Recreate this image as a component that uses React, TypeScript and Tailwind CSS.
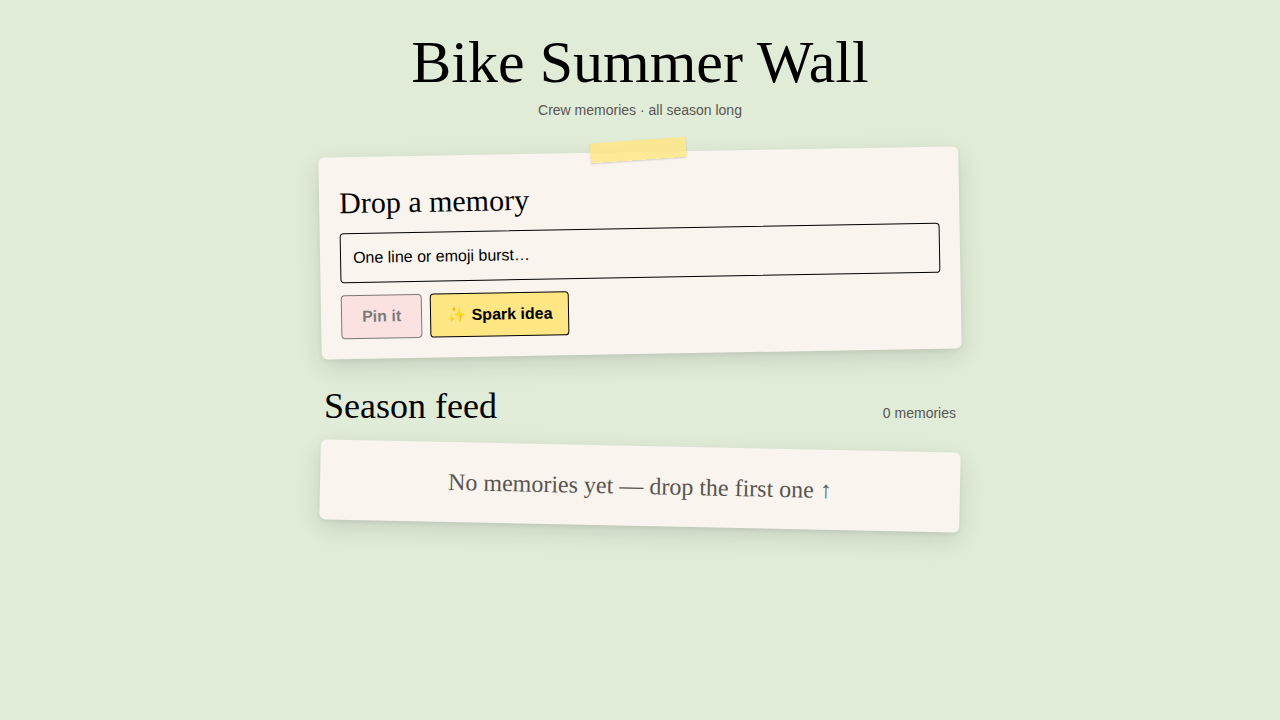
import { useState } from "react";
import type { FormEvent } from "react";

const ideas = [
  "Sunset loop with the whole crew 🚲",
  "Flat tire, best ice cream stop ever 🍦",
  "Night ride, string lights on 🌙",
];

const serif = "font-['Liberation_Serif',serif]";
const card =
  "rounded-md bg-[#f9f4ee] shadow-[0_8px_24px_rgba(0,0,0,0.12),0_2px_4px_rgba(0,0,0,0.06)]";
const button =
  "h-11 rounded border border-black font-bold text-black disabled:opacity-50";

export default function App() {
  const [text, setText] = useState("");
  const [memories, setMemories] = useState<string[]>([]);

  const pin = (e: FormEvent) => {
    e.preventDefault();
    if (!text.trim()) return;
    setMemories([text.trim(), ...memories]);
    setText("");
  };

  const spark = () => setText(ideas[Math.floor(Math.random() * ideas.length)]);

  return (
    <div className="min-h-screen bg-[#e0ecd8] px-4 py-8 font-['Liberation_Sans',Arial,sans-serif] text-black">
      <main className="mx-auto max-w-[640px]">
        <header className="text-center">
          <h1 className={`${serif} text-[60px] leading-[60px]`}>Bike Summer Wall</h1>
          <p className="mt-2 text-sm text-[#595550]">Crew memories · all season long</p>
        </header>

        <form onSubmit={pin} className={`${card} relative mt-8 -rotate-1 px-5 pt-7 pb-5`}>
          {/* strip of tape holding the card */}
          <div
            className="absolute -top-3 left-1/2 h-5 w-24 -translate-x-1/2 -rotate-3 bg-[#ffe680]/80 shadow-[0_1px_2px_rgba(0,0,0,0.15)]"
            aria-hidden
          />
          <h2 className={`${serif} text-3xl`}>
            <label htmlFor="memory">Drop a memory</label>
          </h2>
          <input
            id="memory"
            type="text"
            value={text}
            onChange={(e) => setText(e.target.value)}
            placeholder="One line or emoji burst…"
            className="mt-3 block h-[50px] w-full rounded border border-black bg-transparent px-3 text-base placeholder:text-black"
          />
          <div className="mt-3 flex gap-2">
            <button type="submit" disabled={!text.trim()} className={`${button} bg-[#ffcfd6] px-5`}>
              Pin it
            </button>
            <button type="button" onClick={spark} className={`${button} bg-[#ffe685] px-4`}>
              ✨ Spark idea
            </button>
          </div>
        </form>

        <section className="mt-8">
          <div className="flex items-baseline justify-between px-1">
            <h2 className={`${serif} text-4xl`}>Season feed</h2>
            <span className="text-sm text-[#595550]">{memories.length} memories</span>
          </div>
          {memories.length === 0 ? (
            <div className={`${card} mt-5 rotate-[1.2deg] p-6 text-center`}>
              <p className={`${serif} text-2xl text-[#595550]`}>
                No memories yet — drop the first one ↑
              </p>
            </div>
          ) : (
            <ul className="mt-5 grid gap-4">
              {memories.map((m, i) => (
                <li key={i} className={`${card} ${serif} p-6 text-2xl`}>
                  {m}
                </li>
              ))}
            </ul>
          )}
        </section>
      </main>
    </div>
  );
}
